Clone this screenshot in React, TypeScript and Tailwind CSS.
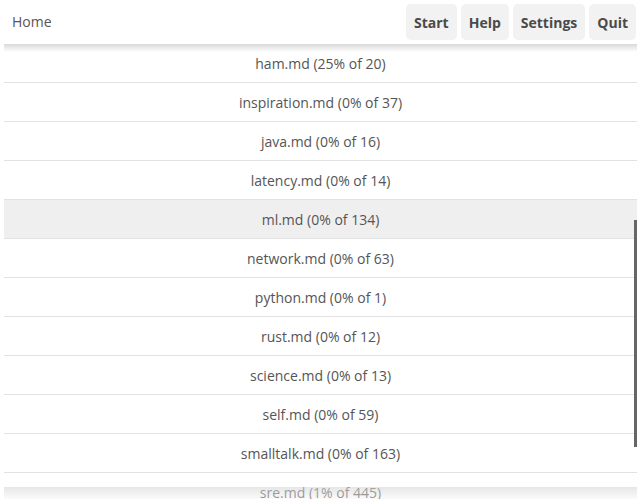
import React from "react";

const files = [
  { name: "ham.md", pct: 25, total: 20 },
  { name: "inspiration.md", pct: 0, total: 37 },
  { name: "java.md", pct: 0, total: 16 },
  { name: "latency.md", pct: 0, total: 14 },
  { name: "ml.md", pct: 0, total: 134, active: true },
  { name: "network.md", pct: 0, total: 63 },
  { name: "python.md", pct: 0, total: 1 },
  { name: "rust.md", pct: 0, total: 12 },
  { name: "science.md", pct: 0, total: 13 },
  { name: "self.md", pct: 0, total: 59 },
  { name: "smalltalk.md", pct: 0, total: 163 },
  { name: "sre.md", pct: 1, total: 445 },
];

const buttons = ["Start", "Help", "Settings", "Quit"];

const App = () => {
  return (
    <div className="h-[499px] w-[641px] overflow-hidden bg-white font-['Open_Sans',sans-serif] text-[14px] text-[#555]">
      <header className="flex h-[44px] items-start justify-between pl-3 pr-[5px] pt-1">
        <span className="mt-[7px] leading-[22px]">Home</span>
        <nav className="flex gap-1">
          {buttons.map((b) => (
            <button
              key={b}
              className="h-[36px] rounded-[5px] bg-[#f2f2f2] px-2 pt-[1px] font-bold text-[#4a4a4a]"
            >
              {b}
            </button>
          ))}
        </nav>
      </header>
      <div className="relative mx-1 h-[455px] overflow-hidden">
        <div className="pointer-events-none absolute inset-x-0 top-0 z-10 h-[8px] bg-gradient-to-b from-[#d9d9d9] to-white/0" />
        {files.map((f) => (
          <div
            key={f.name}
            className={
              "flex h-[39px] items-center justify-center border-b border-[#e2e2e2] pt-[1px] " +
              (f.active ? "bg-[#efefef]" : "")
            }
          >
            {f.name} ({f.pct}% of {f.total})
          </div>
        ))}
        <div className="pointer-events-none absolute right-0 top-[176px] h-[227px] w-[3px] bg-[#666]" />
        <div className="pointer-events-none absolute inset-x-0 top-[443px] z-10 h-[12px] bg-gradient-to-b from-[#d6d6d6]/60 to-[#f4f4f4]/40" />
      </div>
    </div>
  );
};

export default App;
